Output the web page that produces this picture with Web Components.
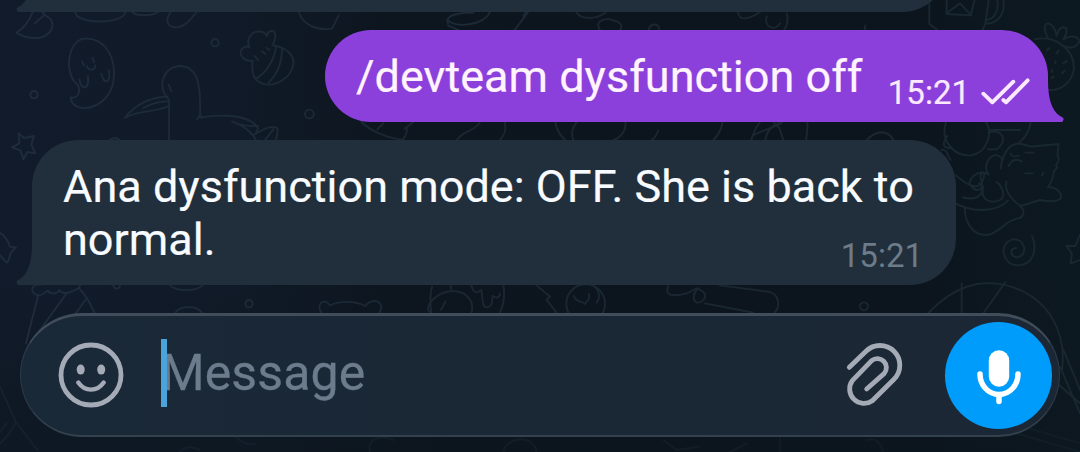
<!DOCTYPE html>
<html lang="en">
<head>
<meta charset="UTF-8">
<title>Chat</title>
<style>
    html, body {
        margin: 0;
        width: 100%;
        height: 100%;
        overflow: hidden;
        background: #0c151e;
    }
    body {
        font-family: Roboto, sans-serif;
    }
</style>
</head>
<body>
<chat-screen>
    <chat-bubble class="previous" direction="in"></chat-bubble>
    <chat-bubble direction="out" time="15:21" read>/devteam dysfunction off</chat-bubble>
    <chat-bubble direction="in" time="15:21">Ana dysfunction mode: OFF. She is back to normal.</chat-bubble>
    <message-composer slot="composer" placeholder="Message"></message-composer>
</chat-screen>

<script>
class ChatWallpaper extends HTMLElement {
    constructor() {
        super();
        this.attachShadow({ mode: 'open' });
    }

    connectedCallback() {
        this.render();
    }

    render() {
        // Doodles are drawn on a 3x canvas (3240 x 1356)
        this.shadowRoot.innerHTML = `
            <style>
                :host {
                    display: block;
                    background:
                        linear-gradient(to bottom, transparent 60%, rgba(12, 22, 30, 0.55) 100%),
                        linear-gradient(to right, #111b2b 0, #101a28 22%, #0d161f 36%, #0c141d 60%, #0c151e 85%, #0d1921 100%);
                }
                svg {
                    display: block;
                    width: 100%;
                    height: 100%;
                }
            </style>
            <svg viewBox="0 0 3240 1356" fill="none" stroke="url(#ink)" stroke-width="5.500" stroke-linecap="round" stroke-linejoin="round">
                <defs>
                    <linearGradient id="ink" gradientUnits="userSpaceOnUse" x1="0" y1="0" x2="3240" y2="0">
                        <stop offset="0" stop-color="#1f2c3c"/>
                        <stop offset="0.4" stop-color="#1a2733"/>
                        <stop offset="1" stop-color="#192730"/>
                    </linearGradient>
                </defs>

                <!-- top left: hat, ghost, pelican, bee -->
                <path d="M98 36C88 62 72 84 50 98C78 116 118 120 140 104C164 88 162 58 138 48L126 34M104 70L134 44M226 36C226 74 372 74 376 36M396 36C410 50 458 48 474 36M512 36C492 64 504 84 532 82C560 78 572 56 590 36M896 36C910 76 950 92 996 86L1016 46"/>
                <path d="M212 292C216 350 340 330 342 226C344 150 300 112 252 116C204 124 194 210 224 246C246 262 240 298 212 292ZM246 184L252 196M278 174L282 186M260 198C266 214 286 212 286 196M238 238C244 274 268 270 264 228M304 222C312 256 334 250 326 210"/>
                <circle cx="102" cy="284" r="11"/>
                <circle cx="645" cy="128" r="11"/>
                <circle cx="928" cy="342" r="13"/>
                <path d="M507 424V298C470 266 486 198 542 198C588 200 604 240 600 352C650 344 720 342 760 368L774 384L768 400M592 358L600 344L606 354M502 290C450 292 404 316 374 354C414 328 460 340 506 318M430 324C450 312 480 304 502 304M506 254L514 274M696 364C730 376 756 396 770 424M718 372C740 380 754 378 774 378M762 404C790 388 810 376 832 384C836 400 828 412 826 424M792 424L820 388"/>
                <path d="M758 182C732 186 716 164 724 150C730 138 742 138 748 142C738 118 752 96 776 94C790 94 798 102 800 108C806 86 828 90 826 108C826 118 822 128 818 136C850 140 884 160 880 192C876 232 824 264 786 250C760 242 754 214 758 182M828 142C822 180 800 218 768 236M846 148C846 190 828 226 806 248M764 168L774 180M786 154L796 162M800 144L808 150"/>
                <path d="M56 400L72 414L102 408L94 434L106 460L82 456L70 478L62 452L36 442L58 430ZM330 420Q345 408 358 420"/>
                <path d="M2 700C20 712 26 728 30 740L48 742L32 758C28 776 24 788 20 788L0 766"/>

                <!-- between the first bubbles -->
                <path d="M724 70C712 44 760 38 800 38M724 58C738 86 832 78 850 36M724 76L756 90M964 36C950 58 938 70 924 90M958 36L950 48" transform="translate(620 0)"/>
                <path d="M1730 38C1746 60 1788 58 1816 38M1800 90C1780 60 1820 52 1842 62C1866 68 1868 80 1860 90M1946 90C1950 68 1976 68 1978 90M2214 36C2216 66 2250 56 2280 36M2300 50C2290 84 2330 94 2340 70M2360 40C2366 60 2362 76 2352 90M2596 76L2594 90"/>
                <path d="M1084 366C1110 392 1160 414 1210 420M1132 388L1150 370M1214 386L1240 366M1220 386C1224 400 1214 410 1208 420M1370 420C1390 390 1430 392 1440 366M1514 366C1520 390 1510 410 1500 420M1666 366C1670 390 1684 410 1696 420M1720 420C1712 400 1716 386 1730 366M1840 420C1866 412 1880 386 1876 366M1974 392C1970 404 1966 414 1954 420M2168 366C2164 390 2152 408 2140 420M2254 420C2260 396 2268 382 2280 366M2258 406L2344 370M2320 366L2338 384L2350 420M2422 366C2424 390 2420 404 2418 420"/>

                <!-- right edge: mug, strawberry, cat, swirl -->
                <path d="M2788 0V72L2810 88M2840 0V42L2912 46L2924 0M2840 40L2880 10L2914 46M2966 0L2956 70L2948 90M2992 0C2998 36 2980 58 2960 60M3010 0C3018 44 2988 74 2958 70"/>
                <path d="M3104 118C3160 106 3220 140 3222 204C3218 248 3180 274 3144 270M3144 114C3130 88 3132 70 3146 70C3160 74 3166 90 3170 108C3172 90 3184 76 3198 84C3204 96 3196 108 3190 118M3192 118C3210 104 3232 108 3238 122C3232 146 3204 146 3186 136M3142 150L3148 144M3170 160L3176 152M3166 184V190M3190 190L3200 184M3156 208V216M3186 220L3194 212M3154 234L3162 230"/>
                <path d="M2838 366C2820 420 2860 470 2912 466C2960 460 2980 400 2958 366M2842 408C2820 440 2838 444 2850 444M2966 390H3060M2966 398C3010 384 3024 424 2990 448H2964M3092 366C3086 400 3076 410 3058 428"/>
                <path d="M3064 432C3032 424 3006 460 3002 506M3064 432L3094 440L3176 432L3172 466C3184 480 3170 488 3168 496C3178 506 3160 508 3160 520C3160 540 3150 552 3144 562C3170 560 3188 580 3182 596C3170 606 3140 604 3120 600L3062 618C3040 604 3010 572 3020 544M3032 460C3036 476 3048 466 3056 468M3026 498C3036 480 3046 474 3066 484M3076 458H3100M3076 520H3098M3126 526L3130 518"/>
                <path d="M3008 480C2986 440 2940 490 2966 524C2946 510 2918 520 2908 548C2922 580 2954 576 2944 542C2934 514 2960 510 2950 536C2940 574 2906 560 2868 526M2888 592C2940 606 2960 570 2938 550M2950 560C2940 600 2970 612 3000 600C3016 592 3012 564 2990 546M2866 610C2910 634 2984 642 3024 602M2894 624C2896 682 2930 714 2974 702C3010 686 3018 660 3060 654C3072 646 3076 632 3060 618"/>
                <path d="M3096 708C3114 750 3098 796 3054 796C3006 796 2994 730 3038 718C3076 714 3086 766 3052 772C3030 770 3028 744 3048 744"/>
                <path d="M3240 704L3226 738L3200 738L3216 762L3212 790L3240 780"/>
                <path d="M2296 420C2300 390 2320 374 2346 366M2600 420C2640 380 2670 400 2680 420M2824 450C2844 448 2842 468 2852 480"/>

                <!-- strip above the composer -->
                <path d="M124 854C90 850 88 882 116 886C132 886 136 874 144 872C150 886 176 880 178 870C190 888 220 874 232 866C244 862 240 850 236 846M114 888L78 1030M200 880L110 1004M236 864C258 884 270 910 284 940M258 898L140 1060M340 856C340 870 362 868 360 856M510 856C530 876 590 874 608 856M526 938C540 916 590 916 606 938"/>
                <circle cx="747" cy="911" r="11"/>
                <path d="M964 938C948 914 970 890 990 916C1020 902 1064 902 1096 918C1114 890 1160 904 1138 938M1296 860C1290 880 1290 920 1294 938C1260 930 1320 850 1390 880C1420 900 1420 920 1414 938M1352 856L1354 870M1336 904Q1330 920 1322 930M1414 856C1420 880 1430 880 1444 870C1450 900 1444 922 1462 922C1480 920 1476 896 1478 888C1488 896 1500 894 1500 880M1510 856C1516 890 1508 920 1500 938M1610 856L1650 890L1640 900L1670 938"/>
                <circle cx="1757" cy="911" r="58"/>
                <path d="M1722 888C1726 910 1748 900 1754 912C1764 900 1770 896 1766 882M1780 856C1806 880 1796 900 1790 908M2006 856C1990 890 2020 890 2060 880C2080 874 2090 856 2100 870C2130 880 2110 910 2090 908C2076 900 2080 880 2090 870M2160 856L2310 876C2340 886 2340 920 2324 938M2114 910L2260 938"/>
                <circle cx="2592" cy="919" r="12"/>
                <path d="M2784 940C2860 860 2940 830 3040 862C3150 902 3200 1000 3186 1110M2885 850V940M3016 846L2950 940M3186 1040L3240 1170M3180 1100L3240 1240M3160 1140L3240 1210"/>

                <!-- below the composer, mostly faded out -->
                <g opacity="0.4">
                    <path d="M0 1160L48 1266L112 1350M48 1266C30 1300 14 1320 0 1330M20 1270L0 1296M540 1356Q560 1330 600 1350M710 1312Q730 1336 768 1332M1110 1356C1100 1320 1140 1300 1180 1320M1510 1356C1520 1310 1600 1300 1610 1356M1990 1320L2030 1350L2100 1340M2190 1356L2240 1330M2340 1312V1356M2600 1320C2630 1310 2640 1330 2650 1356M2980 1280L3240 1356M3000 1260L3240 1330"/>
                </g>
            </svg>
        `;
    }
}

class ChatBubble extends HTMLElement {
    constructor() {
        super();
        this.attachShadow({ mode: 'open' });
    }

    connectedCallback() {
        this.render();
    }

    render() {
        const time = this.getAttribute('time');
        this.shadowRoot.innerHTML = `
            <style>
                :host {
                    --bubble-color: #202f3b;
                    display: grid;
                    position: relative;
                    box-sizing: border-box;
                    flex: none;
                    width: 924px;
                    height: 145px;
                    padding: 20px 33px 0 31px;
                    margin-left: 32px;
                    border-radius: 46px 46px 46px 0;
                    background: var(--bubble-color);
                    color: #f8fbff;
                }
                :host([direction="out"]) {
                    --bubble-color: #8c40db;
                    align-self: flex-end;
                    width: 723px;
                    height: 92px;
                    padding-right: 18px;
                    margin-right: 32px;
                    border-radius: 46px 46px 0 46px;
                    color: #fff3ff;
                }
                .text, .meta {
                    grid-area: 1 / 1;
                }
                .text {
                    font-size: 45px;
                    line-height: 53px;
                    letter-spacing: 0.02px;
                    -webkit-text-stroke: 0.2px currentColor;
                }
                .meta {
                    display: flex;
                    place-self: end;
                    align-items: flex-start;
                    gap: 10px;
                    margin-bottom: 9px;
                    font-size: 33px;
                    line-height: 40px;
                    color: #6d7c8a;
                }
                :host([direction="out"]) .meta {
                    color: #fbe9ff;
                    -webkit-text-stroke: 0.2px currentColor;
                }
                .checks {
                    display: block;
                    width: 50px;
                    height: 30px;
                    margin-top: 5px;
                }
                .tail {
                    position: absolute;
                    right: 100%;
                    bottom: 0;
                    width: 17px;
                    height: 42px;
                    margin-right: -1px;
                    fill: var(--bubble-color);
                    transform: scaleX(-1);
                }
                :host([direction="out"]) .tail {
                    right: auto;
                    left: 100%;
                    margin: 0 0 0 -1px;
                    transform: none;
                }
            </style>
            <div class="text"><slot></slot></div>
            ${time ? `
                <div class="meta">
                    <span>${time}</span>
                    ${this.hasAttribute('read') ? `
                        <svg class="checks" viewBox="0 0 150 90" fill="none" stroke="currentColor" stroke-width="11.500" stroke-linecap="round" stroke-linejoin="round">
                            <path d="M10 47L37 73L100 11M70 66L78 73L143 7"/>
                        </svg>
                    ` : ''}
                </div>
            ` : ''}
            <svg class="tail" viewBox="0 0 17 42"><path d="M0 0H1C1 17 4 30 13 36C16 37.500 17.500 38 16 41L15 42H0Z"/></svg>
        `;
    }
}

class IconButton extends HTMLElement {
    constructor() {
        super();
        this.attachShadow({ mode: 'open' });
    }

    connectedCallback() {
        this.render();
    }

    get icons() {
        return {
            smile: `
                <svg viewBox="-33 -33 66 66" fill="none" stroke="currentColor" stroke-linecap="round">
                    <circle r="30" stroke-width="4.800"/>
                    <path d="M-12.700 7.500C-6 17 6 17 12.700 7.500" stroke-width="4.400"/>
                    <g fill="currentColor" stroke="none"><ellipse cx="-10.300" cy="-5.400" rx="4" ry="5"/><ellipse cx="10.200" cy="-5.400" rx="4" ry="5"/></g>
                </svg>`,
            clip: `
                <svg viewBox="20 20 198 198" fill="none" stroke="currentColor" stroke-width="14.500" stroke-linecap="round" stroke-linejoin="round">
                    <path d="M45 96L95 48A59 59 0 0 1 179 132L114 196A43 43 0 0 1 54 136L112 76A27 27 0 0 1 150 114L97 161"/>
                </svg>`,
            mic: `
                <svg viewBox="-33 -33 66 66" fill="none" stroke="currentColor" stroke-width="5.500" stroke-linecap="round">
                    <rect x="-10.200" y="-24.700" width="20.400" height="36.400" rx="10.200" fill="currentColor" stroke="none"/>
                    <path d="M-19 -1A19 20.500 0 0 0 19 -1M0 20V26.500"/>
                </svg>`
        };
    }

    render() {
        this.shadowRoot.innerHTML = `
            <style>
                :host {
                    display: grid;
                    place-items: center;
                    flex: none;
                    width: 66px;
                    height: 66px;
                    color: #a5abb6;
                }
                :host([filled]) {
                    width: 107px;
                    height: 107px;
                    border-radius: 50%;
                    background: #009cfb;
                    color: #fff;
                }
                svg {
                    display: block;
                    width: 66px;
                    height: 66px;
                }
            </style>
            ${this.icons[this.getAttribute('icon')]}
        `;
    }
}

class MessageComposer extends HTMLElement {
    constructor() {
        super();
        this.attachShadow({ mode: 'open' });
    }

    connectedCallback() {
        this.render();
    }

    render() {
        this.shadowRoot.innerHTML = `
            <style>
                :host {
                    display: flex;
                    align-items: center;
                    box-sizing: border-box;
                    height: 124px;
                    padding: 0 7px 1px 37px;
                    border: 1px solid #2b3948;
                    border-width: 3px 1px 2px;
                    border-color: #414d5b #2b3948 #33404d;
                    border-radius: 62px;
                    background: linear-gradient(to right, #1a2937, #1a2836 60%, #1c2735);
                }
                .field {
                    position: relative;
                    flex: 1;
                    margin: 0 0 4px 37px;
                    font-size: 50px;
                    line-height: 66px;
                    letter-spacing: 0.1px;
                    color: #6c7c8c;
                    -webkit-text-stroke: 0.3px currentColor;
                }
                .caret {
                    position: absolute;
                    left: 0;
                    top: -1px;
                    width: 6px;
                    height: 68px;
                    background: #4ba3dc;
                }
                icon-button[icon="clip"] {
                    margin: 0 38px 0 -1px;
                }
            </style>
            <icon-button icon="smile"></icon-button>
            <div class="field">${this.getAttribute('placeholder')}<span class="caret"></span></div>
            <icon-button icon="clip"></icon-button>
            <icon-button icon="mic" filled></icon-button>
        `;
    }
}

class ChatScreen extends HTMLElement {
    constructor() {
        super();
        this.attachShadow({ mode: 'open' });
    }

    connectedCallback() {
        this.render();
    }

    render() {
        this.shadowRoot.innerHTML = `
            <style>
                :host {
                    display: flex;
                    flex-direction: column;
                    position: relative;
                    width: 1080px;
                    height: 452px;
                    overflow: hidden;
                }
                chat-wallpaper {
                    position: absolute;
                    inset: 0;
                }
                .messages {
                    display: flex;
                    flex-direction: column;
                    gap: 18px;
                    position: relative;
                }
                /* only the bottom edge of the scrolled message is visible */
                ::slotted(.previous) {
                    margin-top: -133px;
                    width: 916px !important;
                }
                .composer {
                    position: relative;
                    margin: 28px 20px 15px;
                }
            </style>
            <chat-wallpaper></chat-wallpaper>
            <div class="messages"><slot></slot></div>
            <div class="composer"><slot name="composer"></slot></div>
        `;
    }
}

customElements.define('chat-wallpaper', ChatWallpaper);
customElements.define('chat-bubble', ChatBubble);
customElements.define('icon-button', IconButton);
customElements.define('message-composer', MessageComposer);
customElements.define('chat-screen', ChatScreen);
</script>
</body>
</html>
